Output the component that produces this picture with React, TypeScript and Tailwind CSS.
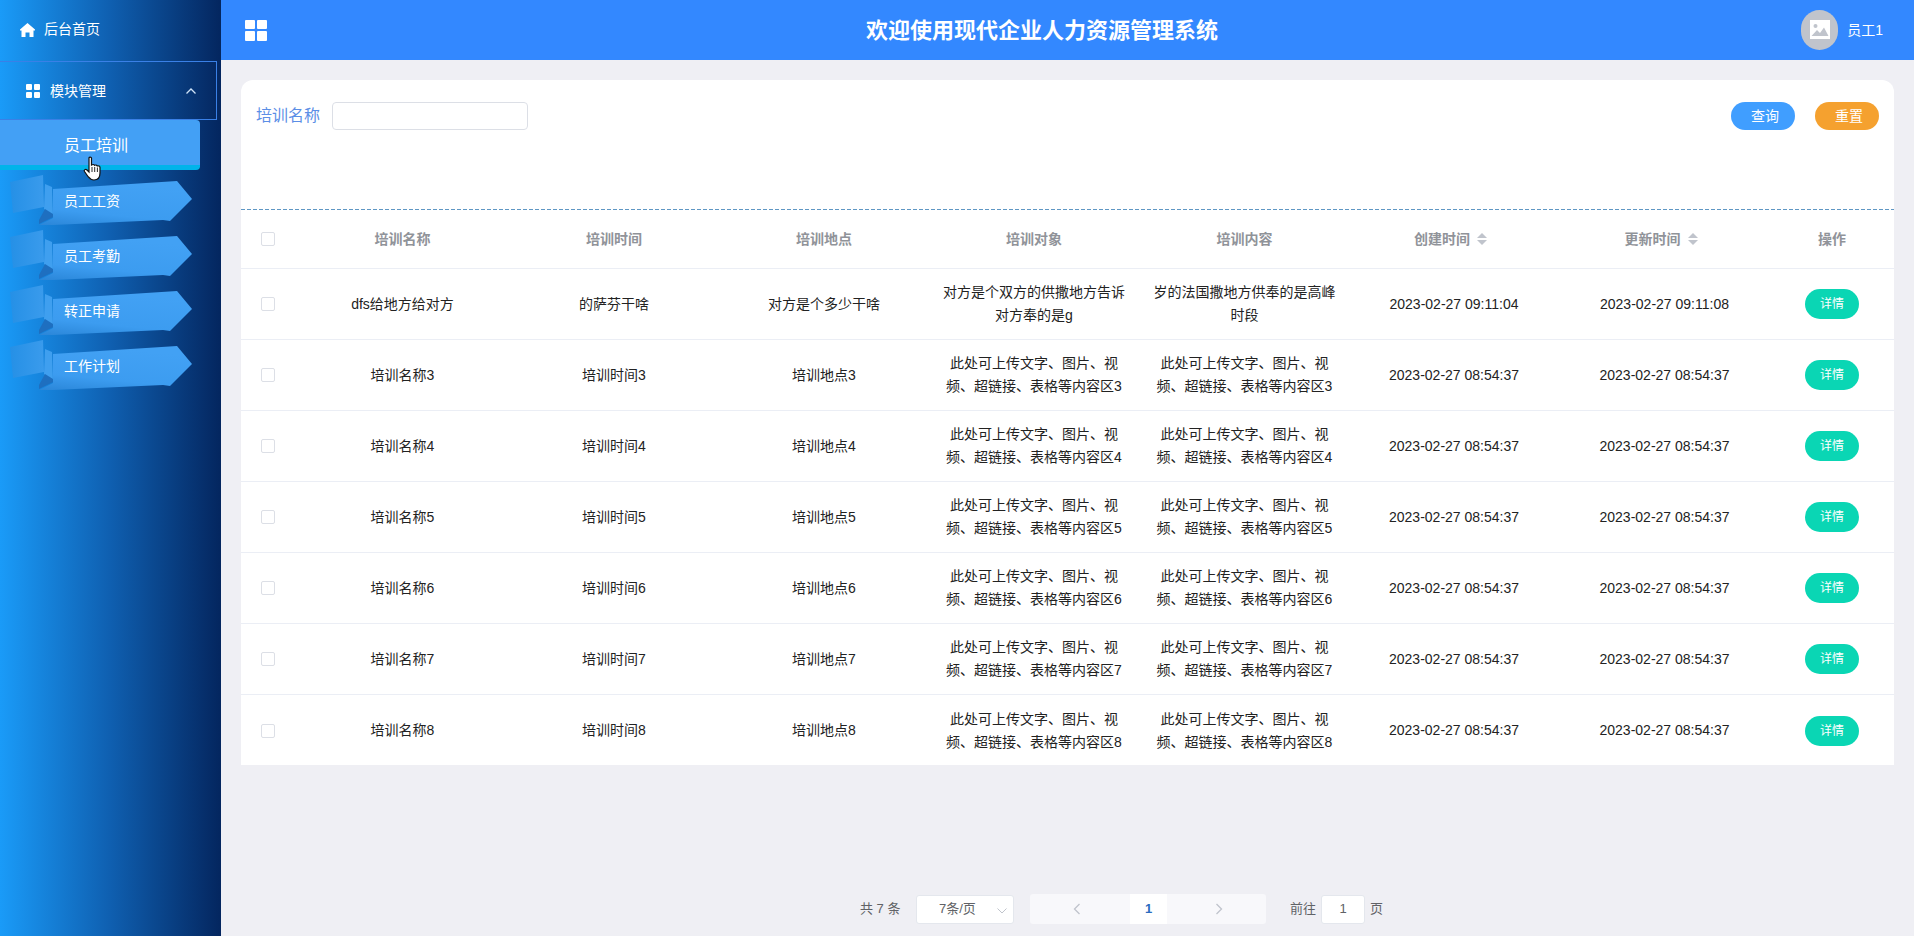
import React from "react";

const FONT = '"Liberation Sans","Noto Sans CJK SC",sans-serif';

const rows = [
  { n: "dfs给地方给对方", t: "的萨芬干啥", p: "对方是个多少干啥", o: "对方是个双方的供撒地方告诉对方奉的是g", c: "岁的法国撒地方供奉的是高峰时段", a: "2023-02-27 09:11:04", u: "2023-02-27 09:11:08" },
  ...[3, 4, 5, 6, 7, 8].map((i) => ({
    n: `培训名称${i}`,
    t: `培训时间${i}`,
    p: `培训地点${i}`,
    o: `此处可上传文字、图片、视频、超链接、表格等内容区${i}`,
    c: `此处可上传文字、图片、视频、超链接、表格等内容区${i}`,
    a: "2023-02-27 08:54:37",
    u: "2023-02-27 08:54:37",
  })),
];

const GRID = "grid grid-cols-[56px_211px_212px_208px_212px_209px_210px_211px_1fr] items-center";

function Grid4({ className, gap }: { className: string; gap: string }) {
  return (
    <span className={`grid grid-cols-2 ${gap} ${className}`}>
      <i className="bg-white rounded-[1px] block" />
      <i className="bg-white rounded-[1px] block" />
      <i className="bg-white rounded-[1px] block" />
      <i className="bg-white rounded-[1px] block" />
    </span>
  );
}

function Ribbon({ id }: { id: string }) {
  return (
    <svg className="absolute left-0 top-[-5px]" width="200" height="60" viewBox="0 0 200 60">
      <defs>
        <linearGradient id={`${id}a`} x1="0" x2="1" y1="0" y2="0">
          <stop offset="0" stopColor="#2590e6" />
          <stop offset="1" stopColor="#3a9bec" />
        </linearGradient>
        <linearGradient id={`${id}b`} x1="0" x2="0.35" y1="1" y2="0">
          <stop offset="0" stopColor="#2a86d8" />
          <stop offset="0.35" stopColor="#3c9cf0" />
          <stop offset="1" stopColor="#42a1f4" />
        </linearGradient>
      </defs>
      <polygon points="10,12 43,5 44,37 13,43" fill={`url(#${id}a)`} />
      <polygon points="45,14 52,17 53,46 44,39" fill="#3f9fef" />
      <polygon points="39,50 45,39 53,44 53,47 39,54" fill="#1e6fc0" />
      <polygon points="53,19 177,11 192,29 170,51 163,50 53,55 39,55 53,48" fill={`url(#${id}b)`} />
    </svg>
  );
}

function SortIcon() {
  return (
    <span className="w-[24px] flex justify-center">
      <svg width="10" height="14" viewBox="0 0 10 14">
        <polygon points="5,1 10,6 0,6" fill="#c0c4cc" />
        <polygon points="5,13 10,8 0,8" fill="#c0c4cc" />
      </svg>
    </span>
  );
}

function Checkbox() {
  return <span className="block w-[14px] h-[14px] border border-[#dcdfe6] rounded-[2px] bg-white ml-[20px]" />;
}

function Head({ children, sort }: { children: React.ReactNode; sort?: boolean }) {
  return (
    <div className="flex items-center justify-center text-[14px] font-bold text-[#909399]">
      {children}
      {sort && <SortIcon />}
    </div>
  );
}

function Cell({ children }: { children: React.ReactNode }) {
  return <div className="px-[10px] text-center text-[14px] leading-[23px] text-[#222]">{children}</div>;
}

export default function App() {
  return (
    <div className="flex w-[1914px] h-[936px] overflow-hidden bg-[#efeff4]" style={{ fontFamily: FONT }}>
      <aside className="relative w-[221px] h-full shrink-0 bg-[linear-gradient(90deg,#1a9bf8_0%,#0f5fb0_50%,#04265f_100%)] text-white">
        <div className="h-[61px] flex items-center pl-[20px] pb-[2px] text-[14px]">
          <svg width="15" height="14" viewBox="0 0 15 14" className="mr-[9px]">
            <path d="M7.5 0 L15 6.5 L15 7.5 L13.5 7.5 L13.5 14 L9.5 14 L9.5 9.5 L5.5 9.5 L5.5 14 L1.5 14 L1.5 7.5 L0 7.5 L0 6.5 Z" fill="#fff" />
          </svg>
          后台首页
        </div>
        <div className="h-[59px] w-[217px] flex items-center pl-[26px] pt-[1px] border border-l-0 border-[#3a80e6] text-[14px]">
          <Grid4 className="w-[14px] h-[14px] mr-[10px]" gap="gap-[2px]" />
          <span>模块管理</span>
          <svg width="12" height="8" viewBox="0 0 12 8" className="ml-[79px]" fill="none" stroke="#cfe3f7" strokeWidth="1.3">
            <path d="M1.5 6.5 L6 2 L10.5 6.5" />
          </svg>
        </div>
        <div className="h-[50px] w-[200px] flex items-center pl-[64px] pt-[7px] text-[16px] bg-[#43a0f5] border-b-[5px] border-[#00b4ea] rounded-r-[4px]">
          员工培训
        </div>
        <div className="pt-[5px]">
          {["员工工资", "员工考勤", "转正申请", "工作计划"].map((t, i) => (
            <div key={t} className="relative h-[55px]">
              <Ribbon id={`rb${i}`} />
              <span className="absolute left-[64px] top-[16px] text-[14px] leading-[20px]">{t}</span>
            </div>
          ))}
        </div>
        <svg className="absolute left-[83px] top-[156px]" width="20" height="25" viewBox="0 0 20 25">
          <path
            d="M6 2 C6 0.8 8.5 0.8 8.5 2 L8.5 9 C9.5 8.3 11 8.3 11.5 9.3 C12.5 8.7 14 9 14.3 10 C15.5 9.5 17 10 17 11.5 L17 17 C17 21 15 24 11 24 C7.5 24 6.5 22.5 5 20.5 L1.5 15.5 C0.6 14 2.5 12.5 4 14 L6 16 Z"
            fill="#fff"
            stroke="#111"
            strokeWidth="1.2"
          />
          <path d="M9 11 V16 M11.7 11 V16 M14.4 11.5 V16" stroke="#111" strokeWidth="0.9" />
        </svg>
      </aside>

      <div className="flex-1 min-w-0 flex flex-col">
        <header className="h-[60px] shrink-0 flex items-center bg-[#3388ff] text-white pl-[24px]">
          <Grid4 className="w-[22px] h-[21px]" gap="gap-[2px]" />
          <h1 className="ml-[599px] text-[22px] font-bold whitespace-nowrap">欢迎使用现代企业人力资源管理系统</h1>
          <div className="ml-auto mr-[31px] flex items-center">
            <span className="w-[37px] h-[40px] rounded-full bg-[#c0c4cc] flex items-center justify-center">
              <svg width="20" height="20" viewBox="0 0 20 20">
                <rect width="20" height="19" fill="#fff" />
                <circle cx="5.5" cy="6" r="2" fill="#c0c4cc" />
                <path d="M1.5 16 L7 10 L10 13 L14 7.5 L18.5 16 Z" fill="#c0c4cc" />
              </svg>
            </span>
            <span className="ml-[9px] text-[14px]">员工1</span>
          </div>
        </header>

        <main className="flex-1 min-h-0 flex flex-col px-[20px] pt-[20px]">
          <section className="h-[685px] overflow-hidden bg-white rounded-t-[12px]">
            <div className="h-[129px] flex items-start pt-[22px] pl-[15px] pr-[15px]">
              <span className="text-[16px] leading-[28px] text-[#5b8ee6]">培训名称</span>
              <input className="ml-[12px] w-[196px] h-[28px] bg-white border border-[#dcdfe6] rounded-[4px]" />
              <button className="ml-auto w-[64px] h-[28px] rounded-full bg-[#409eff] text-white text-[14px] pl-[4px]">查询</button>
              <button className="ml-[20px] w-[64px] h-[28px] rounded-full bg-[#f5a12f] text-white text-[14px] pl-[4px]">重置</button>
            </div>
            <div className="h-[1px] bg-[repeating-linear-gradient(90deg,#5f97c4_0_4px,transparent_4px_6px)]" />
            <div className={`${GRID} h-[59px] border-b border-[#ebeef5]`}>
              <Checkbox />
              <Head>培训名称</Head>
              <Head>培训时间</Head>
              <Head>培训地点</Head>
              <Head>培训对象</Head>
              <Head>培训内容</Head>
              <Head sort>创建时间</Head>
              <Head sort>更新时间</Head>
              <Head>操作</Head>
            </div>
            {rows.map((r, i) => (
              <div key={i} className={`${GRID} h-[71px] ${i < rows.length - 1 ? "border-b border-[#ebeef5]" : ""}`}>
                <Checkbox />
                <Cell>{r.n}</Cell>
                <Cell>{r.t}</Cell>
                <Cell>{r.p}</Cell>
                <Cell>{r.o}</Cell>
                <Cell>{r.c}</Cell>
                <Cell>{r.a}</Cell>
                <Cell>{r.u}</Cell>
                <div className="flex justify-center">
                  <button className="w-[54px] h-[30px] rounded-full bg-[#0ad6b4] text-white text-[12px]">详情</button>
                </div>
              </div>
            ))}
          </section>

          <div className="flex items-center h-[30px] mt-[129px] ml-[619px] text-[13px] text-[#606266]">
            <span className="w-[56px]">共 7 条</span>
            <div className="w-[98px] h-[29px] bg-white border border-[#e4e7ed] rounded-[3px] flex items-center pl-[22px]">
              <span>7条/页</span>
              <svg width="12" height="8" viewBox="0 0 12 8" className="ml-[20px] mt-[4px]" fill="none" stroke="#c0c4cc" strokeWidth="1">
                <path d="M1.5 1.5 L6 6 L10.5 1.5" />
              </svg>
            </div>
            <div className="ml-[16px] w-[236px] h-[30px] bg-[#f8f8fb] rounded-[3px] flex items-center">
              <svg width="8" height="12" viewBox="0 0 8 12" className="ml-[43px]" fill="none" stroke="#c0c4cc" strokeWidth="1.3">
                <path d="M6.5 1 L1.5 6 L6.5 11" />
              </svg>
              <span className="ml-[49px] w-[37px] h-[30px] bg-white flex items-center justify-center font-bold text-[#2b6cc0]">1</span>
              <svg width="8" height="12" viewBox="0 0 8 12" className="ml-[48px]" fill="none" stroke="#c0c4cc" strokeWidth="1.3">
                <path d="M1.5 1 L6.5 6 L1.5 11" />
              </svg>
            </div>
            <span className="ml-[24px]">前往</span>
            <span className="ml-[5px] w-[44px] h-[29px] bg-white border border-[#e4e7ed] rounded-[3px] flex items-center justify-center">1</span>
            <span className="ml-[5px]">页</span>
          </div>
        </main>
      </div>
    </div>
  );
}
